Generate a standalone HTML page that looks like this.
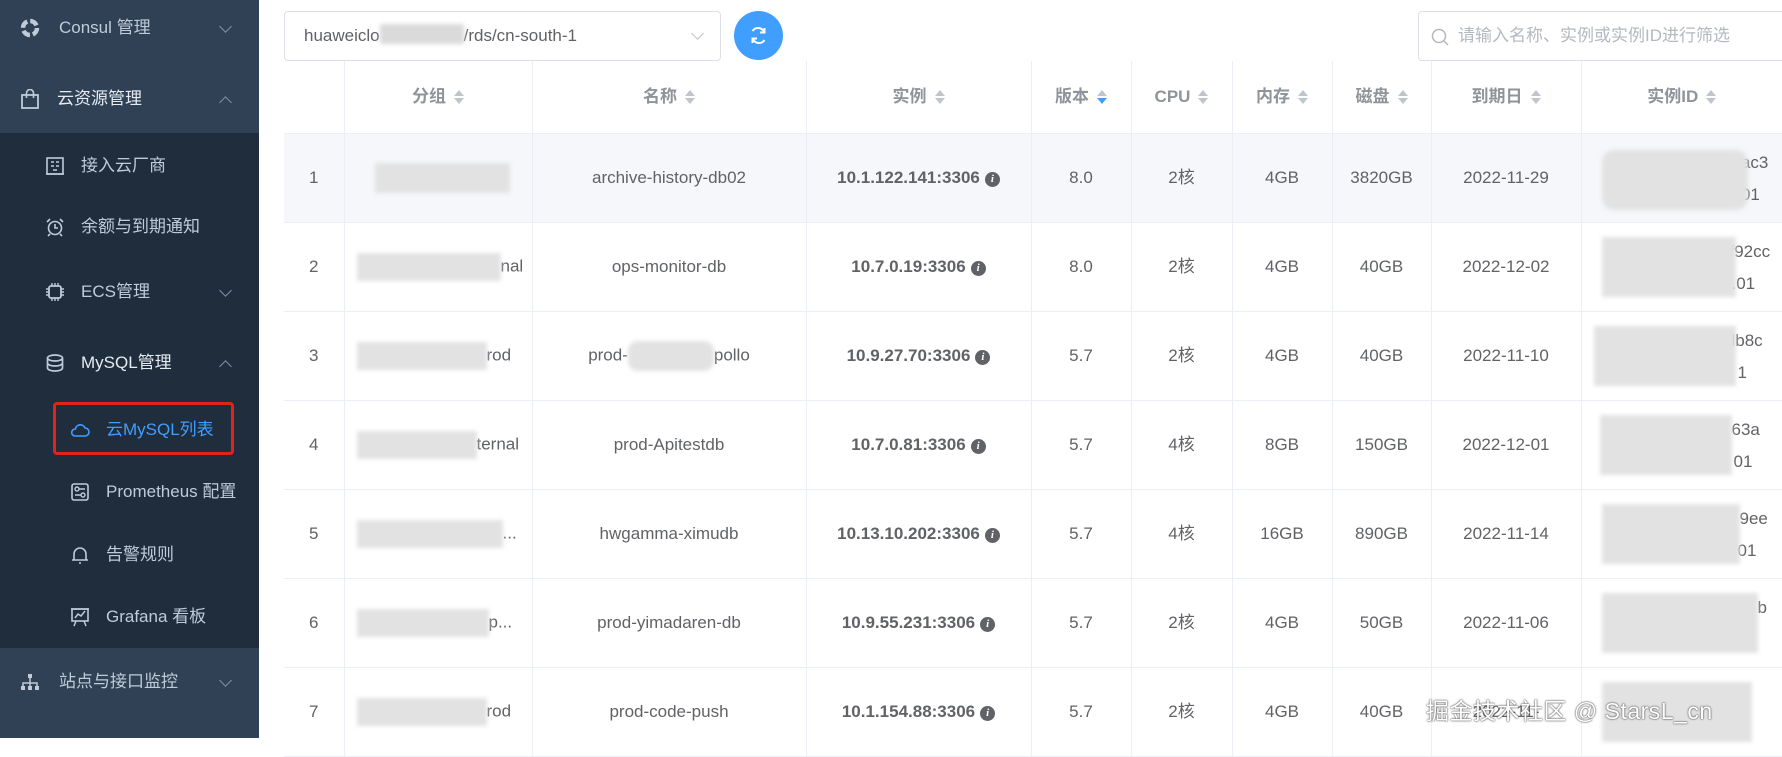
<!DOCTYPE html>
<html><head><meta charset="utf-8">
<style>
*{margin:0;padding:0;box-sizing:border-box}
body{width:1782px;height:738px;overflow:hidden;background:#fff;font-family:"Liberation Sans","Noto Sans CJK SC",sans-serif;position:relative}
.side{position:absolute;left:0;top:0;width:259px;height:738px;background:#1f2d3d}
.lt{position:absolute;left:0;width:259px;background:#304156}
.mi{position:absolute;left:0;width:259px;height:40px;line-height:40px;color:#bfcbd9;font-size:17px;white-space:nowrap}
.mi svg{position:absolute;top:10px}
.mi span{position:absolute}
.chev{position:absolute;left:221px;top:14px;width:9px;height:9px;border-right:1.3px solid #8090a4;border-bottom:1.3px solid #8090a4;transform:rotate(45deg)}
.chev.up{transform:rotate(-135deg);top:19px}
.sel{position:absolute;left:284px;top:11px;width:437px;height:50px;border:1px solid #dcdfe6;border-radius:4px;font-size:17px;color:#606266;line-height:48px;padding-left:19px}
.btn{position:absolute;left:734px;top:11px;width:49px;height:49px;border-radius:50%;background:#409eff}
.search{position:absolute;left:1418px;top:11px;width:380px;height:50px;border:1px solid #dcdfe6;border-radius:4px;font-size:17px;color:#b4b8c0;line-height:48px;padding-left:39px}
table{position:absolute;left:284px;top:61px;width:1498px;border-collapse:collapse;table-layout:fixed;font-size:17px;color:#606266}
th{height:72px;color:#909399;font-weight:bold;border-right:1px solid #ebeef5;border-bottom:1px solid #ebeef5;text-align:center;white-space:nowrap;line-height:20px}
td{height:89px;line-height:20px;border-right:1px solid #ebeef5;border-bottom:1px solid #ebeef5;text-align:center;position:relative;white-space:nowrap;overflow:hidden}
td.g{text-align:left;padding-left:12px}
tr.hl td{background:#f5f7fa}
.car{display:inline-block;width:10px;height:16px;position:relative;vertical-align:middle;margin-left:8px}
.car:before,.car:after{content:"";position:absolute;left:0;border-left:5px solid transparent;border-right:5px solid transparent}
.car:before{top:1px;border-bottom:6px solid #c0c4cc}
.car:after{bottom:1px;border-top:6px solid #c0c4cc}
.car.d:after{border-top-color:#409eff}
.b{font-weight:bold}
.info{display:inline-block;width:15px;height:15px;border-radius:50%;background:#606266;color:#fff;font-size:11px;line-height:15px;font-weight:bold;font-style:italic;font-family:"Liberation Serif",serif;vertical-align:1px;margin-left:5px}
.bl{position:absolute;background:#e2e2e2;filter:blur(2px)}
.ib{display:inline-block;height:28px;background:#e2e2e2;filter:blur(2px);vertical-align:middle}
.gt{position:absolute;line-height:1}
.wm{position:absolute;left:1426px;top:692px;font-size:23px;color:#fff;text-shadow:0 0 2px #555,0 0 1px #333;letter-spacing:0.5px}
</style></head><body>
<div class="side">
 <div class="lt" style="top:0;height:133px"></div>
 <div class="lt" style="top:648px;height:90px"></div>
 <div class="mi" style="top:8px"><svg style="left:20px" width="20" height="20" viewBox="0 0 20 20"><circle cx="10" cy="10" r="7" fill="none" stroke="#bfcbd9" stroke-width="4.5" stroke-dasharray="8 3"/></svg><span style="left:59px">Consul 管理</span><i class="chev"></i></div>
 <div class="mi" style="top:79px"><svg style="left:20px" width="20" height="20" viewBox="0 0 20 20"><rect x="2" y="6" width="16" height="13" fill="none" stroke="#bfcbd9" stroke-width="1.8"/><path d="M6.5 9V4a3.5 3.5 0 0 1 7 0v5" fill="none" stroke="#bfcbd9" stroke-width="1.6"/></svg><span style="left:57px;color:#e6ebf1">云资源管理</span><i class="chev up"></i></div>
 <div class="mi" style="top:146px"><svg style="left:45px" width="20" height="20" viewBox="0 0 20 20"><rect x="2" y="2" width="16" height="16" fill="none" stroke="#bfcbd9" stroke-width="1.6"/><path d="M6 6h3M11 6h3M6 10h3M11 10h3M8 14h4M1 18h18" stroke="#bfcbd9" stroke-width="1.6"/></svg><span style="left:81px">接入云厂商</span></div>
 <div class="mi" style="top:207px"><svg style="left:45px" width="20" height="20" viewBox="0 0 20 20"><circle cx="10" cy="11" r="6.5" fill="none" stroke="#bfcbd9" stroke-width="1.6"/><path d="M10 7v4h3M2 5l3-3M18 5l-3-3M5 17l-2 2M15 17l2 2" stroke="#bfcbd9" stroke-width="1.6" fill="none"/></svg><span style="left:81px">余额与到期通知</span></div>
 <div class="mi" style="top:272px"><svg style="left:45px" width="20" height="20" viewBox="0 0 20 20"><rect x="4" y="4" width="12" height="12" rx="2" fill="none" stroke="#bfcbd9" stroke-width="1.8"/><path d="M7 1v3M10 1v3M13 1v3M7 16v3M10 16v3M13 16v3M1 7h3M1 10h3M1 13h3M16 7h3M16 10h3M16 13h3" stroke="#bfcbd9" stroke-width="1.4"/></svg><span style="left:81px">ECS管理</span><i class="chev"></i></div>
 <div class="mi" style="top:343px"><svg style="left:45px" width="20" height="20" viewBox="0 0 20 20"><ellipse cx="10" cy="5" rx="7.5" ry="3" fill="none" stroke="#bfcbd9" stroke-width="1.7"/><path d="M2.5 5v10c0 1.7 3.4 3 7.5 3s7.5-1.3 7.5-3V5M2.5 10c0 1.7 3.4 3 7.5 3s7.5-1.3 7.5-3" fill="none" stroke="#bfcbd9" stroke-width="1.7"/></svg><span style="left:81px;color:#e6ebf1">MySQL管理</span><i class="chev up"></i></div>
 <div style="position:absolute;left:53px;top:402px;width:181px;height:53px;border:3px solid #e2231a;border-radius:4px"></div>
 <div class="mi" style="top:410px"><svg style="left:70px" width="20" height="20" viewBox="0 0 20 20"><path d="M5 16h10a4 4 0 0 0 0-8 5 5 0 0 0-9.6 1A3.5 3.5 0 0 0 5 16z" fill="none" stroke="#409eff" stroke-width="1.6"/></svg><span style="left:106px;color:#409eff">云MySQL列表</span></div>
 <div class="mi" style="top:472px"><svg style="left:70px" width="20" height="20" viewBox="0 0 20 20"><rect x="2" y="2" width="16" height="16" rx="2" fill="none" stroke="#bfcbd9" stroke-width="1.6"/><circle cx="7" cy="7" r="2" fill="none" stroke="#bfcbd9" stroke-width="1.4"/><circle cx="13" cy="13" r="2" fill="none" stroke="#bfcbd9" stroke-width="1.4"/><path d="M9 7h6M5 13h6" stroke="#bfcbd9" stroke-width="1.4"/></svg><span style="left:106px">Prometheus 配置</span></div>
 <div class="mi" style="top:535px"><svg style="left:70px" width="20" height="20" viewBox="0 0 20 20"><path d="M4 15V9a6 6 0 0 1 12 0v6M2 15h16M9 18h2" fill="none" stroke="#bfcbd9" stroke-width="1.6"/></svg><span style="left:106px">告警规则</span></div>
 <div class="mi" style="top:597px"><svg style="left:70px" width="20" height="20" viewBox="0 0 20 20"><rect x="2" y="2" width="16" height="12" fill="none" stroke="#bfcbd9" stroke-width="1.6"/><path d="M5 11l3-4 3 2 4-5M6 14l-2 5M14 14l2 5M1 2h18" fill="none" stroke="#bfcbd9" stroke-width="1.5"/></svg><span style="left:106px">Grafana 看板</span></div>
 <div class="mi" style="top:662px"><svg style="left:20px" width="20" height="20" viewBox="0 0 20 20"><rect x="8" y="2" width="4" height="4" fill="#bfcbd9"/><rect x="1" y="14" width="4" height="4" fill="#bfcbd9"/><rect x="8" y="14" width="4" height="4" fill="#bfcbd9"/><rect x="15" y="14" width="4" height="4" fill="#bfcbd9"/><path d="M10 6v8M3 14v-3h14v3" fill="none" stroke="#bfcbd9" stroke-width="1.5"/></svg><span style="left:59px">站点与接口监控</span><i class="chev"></i></div>
</div>

<div class="sel">huaweiclo<span class="ib" style="width:84px;height:20px;background:#dadada;vertical-align:-3px"></span>/rds/cn-south-1<i style="position:absolute;right:18px;top:17px;width:9px;height:9px;border-right:1.3px solid #c0c4cc;border-bottom:1.3px solid #c0c4cc;transform:rotate(45deg)"></i></div>
<div class="btn"><svg width="49" height="49" viewBox="0 0 49 49"><path d="M30 21a6.5 6.5 0 0 0-11.5-1M19 28a6.5 6.5 0 0 0 11.5 1" fill="none" stroke="#fff" stroke-width="2"/><path d="M30.5 17v4.5H26M18.5 32v-4.5H23" fill="none" stroke="#fff" stroke-width="2"/></svg></div>
<div class="search"><svg style="position:absolute;left:12px;top:16px" width="18" height="18" viewBox="0 0 18 18"><circle cx="8" cy="8" r="6.5" fill="none" stroke="#b4b8c0" stroke-width="1.5"/><path d="M13 13l4 4" stroke="#b4b8c0" stroke-width="1.5"/></svg>请输入名称、实例或实例ID进行筛选</div>

<table>
<colgroup><col style="width:60px"><col style="width:188px"><col style="width:274px"><col style="width:225px"><col style="width:100px"><col style="width:101px"><col style="width:100px"><col style="width:99px"><col style="width:150px"><col style="width:201px"></colgroup>
<tr><th></th><th>分组<i class="car"></i></th><th>名称<i class="car"></i></th><th>实例<i class="car"></i></th><th>版本<i class="car d"></i></th><th>CPU<i class="car"></i></th><th>内存<i class="car"></i></th><th>磁盘<i class="car"></i></th><th>到期日<i class="car"></i></th><th style="border-right:0">实例ID<i class="car"></i></th></tr>
<tr class="hl"><td>1</td><td class="g" style="padding-left:30px"><span class="ib" style="width:135px;height:30px"></span></td><td>archive-history-db02</td><td class="b">10.1.122.141:3306<i class="info">i</i></td><td>8.0</td><td>2核</td><td>4GB</td><td>3820GB</td><td>2022-11-29</td><td><span class="gt" style="left:150px;top:20px">nac3</span><span class="gt" style="left:150px;top:52px">n01</span><div class="bl" style="left:20px;top:16px;width:146px;height:60px;border-radius:12px"></div></td></tr>
<tr><td>2</td><td class="g"><span class="ib" style="width:144px"></span>nal</td><td>ops-monitor-db</td><td class="b">10.7.0.19:3306<i class="info">i</i></td><td>8.0</td><td>2核</td><td>4GB</td><td>40GB</td><td>2022-12-02</td><td><span class="gt" style="left:148px;top:20px">f92cc</span><span class="gt" style="left:150px;top:52px">.01</span><div class="bl" style="left:20px;top:14px;width:134px;height:60px"></div></td></tr>
<tr><td>3</td><td class="g"><span class="ib" style="width:130px"></span>rod</td><td>prod-<span class="ib" style="width:86px;border-radius:10px;height:30px"></span>pollo</td><td class="b">10.9.27.70:3306<i class="info">i</i></td><td>5.7</td><td>2核</td><td>4GB</td><td>40GB</td><td>2022-11-10</td><td><span class="gt" style="left:150px;top:20px">lb8c</span><span class="gt" style="left:156px;top:52px">1</span><div class="bl" style="left:12px;top:14px;width:142px;height:60px"></div></td></tr>
<tr><td>4</td><td class="g"><span class="ib" style="width:120px"></span>ternal</td><td>prod-Apitestdb</td><td class="b">10.7.0.81:3306<i class="info">i</i></td><td>5.7</td><td>4核</td><td>8GB</td><td>150GB</td><td>2022-12-01</td><td><span class="gt" style="left:150px;top:20px">63a</span><span class="gt" style="left:152px;top:52px">01</span><div class="bl" style="left:18px;top:14px;width:132px;height:60px"></div></td></tr>
<tr><td>5</td><td class="g"><span class="ib" style="width:146px"></span>...</td><td>hwgamma-ximudb</td><td class="b">10.13.10.202:3306<i class="info">i</i></td><td>5.7</td><td>4核</td><td>16GB</td><td>890GB</td><td>2022-11-14</td><td><span class="gt" style="left:158px;top:20px">9ee</span><span class="gt" style="left:156px;top:52px">01</span><div class="bl" style="left:20px;top:14px;width:138px;height:60px"></div></td></tr>
<tr><td>6</td><td class="g"><span class="ib" style="width:132px"></span>p...</td><td>prod-yimadaren-db</td><td class="b">10.9.55.231:3306<i class="info">i</i></td><td>5.7</td><td>2核</td><td>4GB</td><td>50GB</td><td>2022-11-06</td><td><span class="gt" style="left:176px;top:20px">b</span><div class="bl" style="left:20px;top:14px;width:156px;height:60px"></div></td></tr>
<tr><td>7</td><td class="g"><span class="ib" style="width:130px"></span>rod</td><td>prod-code-push</td><td class="b">10.1.154.88:3306<i class="info">i</i></td><td>5.7</td><td>2核</td><td>4GB</td><td>40GB</td><td>2022-11-</td><td><div class="bl" style="left:20px;top:14px;width:150px;height:60px"></div></td></tr>
</table>
<div class="wm">掘金技术社区 @ StarsL_cn</div>
</body></html>
